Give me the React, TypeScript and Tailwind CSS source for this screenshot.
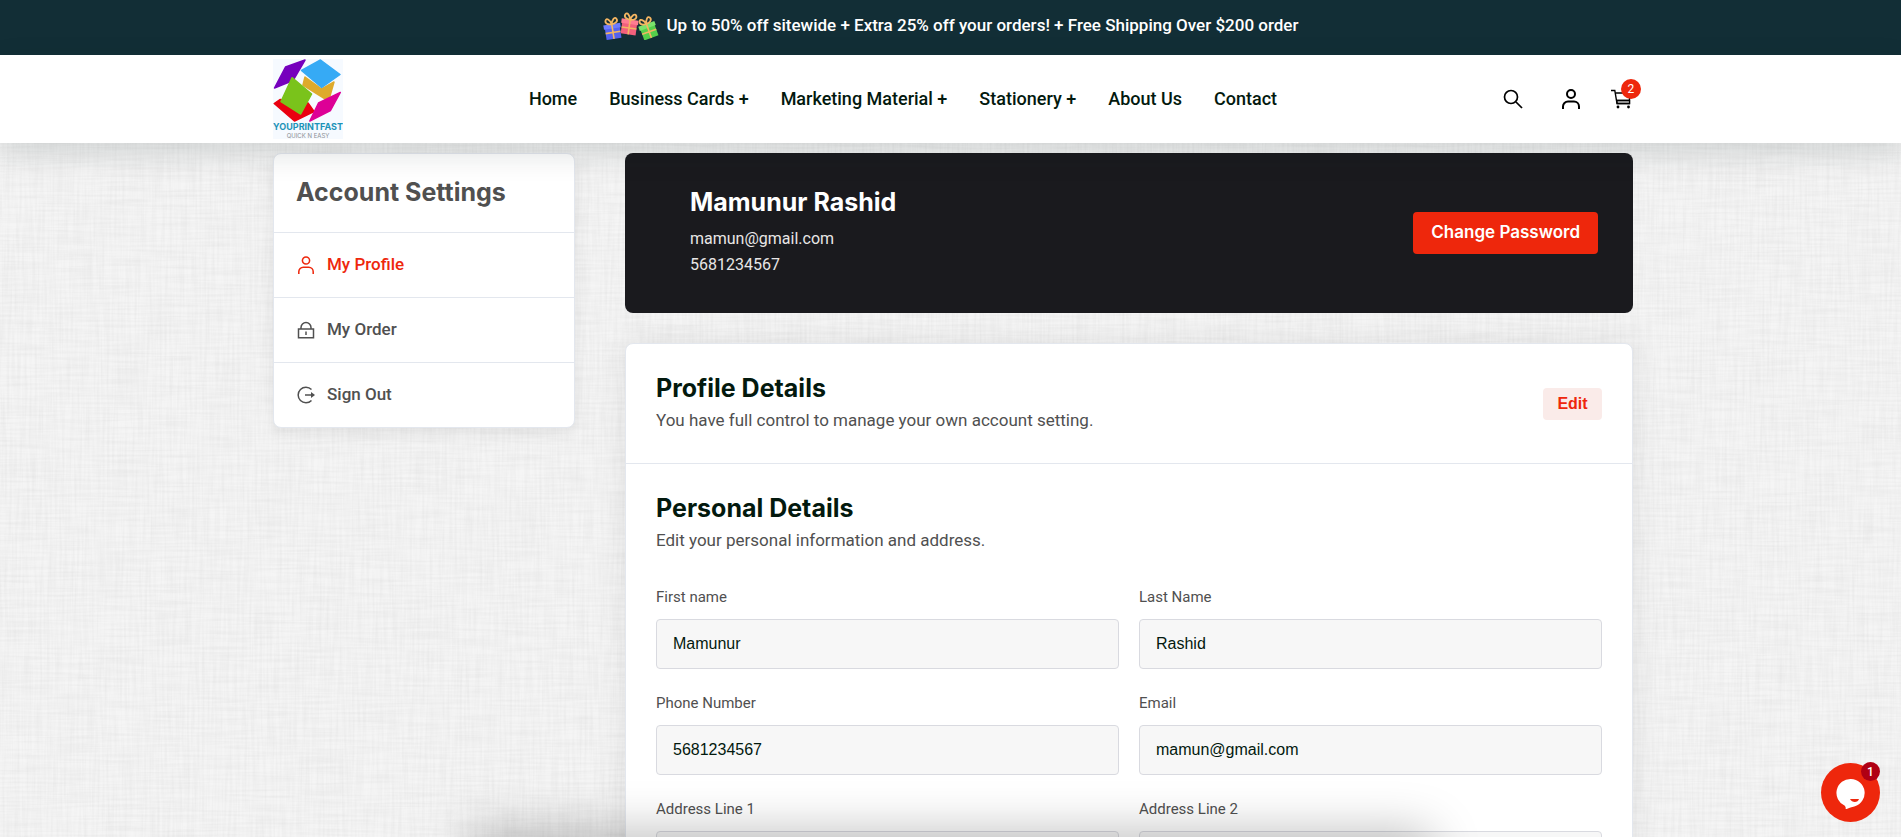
import type { ReactNode } from 'react'

const BODY_FONT = "font-['Roboto','Liberation_Sans',sans-serif]"
const HEADING_FONT = "font-['Inter','Liberation_Sans',sans-serif]"

const NAV_LINKS = [
  { label: 'Home' },
  { label: 'Business Cards', more: true },
  { label: 'Marketing Material', more: true },
  { label: 'Stationery', more: true },
  { label: 'About Us' },
  { label: 'Contact' },
]

const FIELDS = [
  { id: 'firstName', label: 'First name', value: 'Mamunur', type: 'text' },
  { id: 'lastName', label: 'Last Name', value: 'Rashid', type: 'text' },
  { id: 'phone', label: 'Phone Number', value: '5681234567', type: 'tel' },
  { id: 'email', label: 'Email', value: 'mamun@gmail.com', type: 'email' },
  { id: 'address1', label: 'Address Line 1', value: '', type: 'text' },
  { id: 'address2', label: 'Address Line 2', value: '', type: 'text' },
]

const UserIcon = ({ className, weight = 2 }: { className: string; weight?: number }) => (
  <svg className={className} viewBox="0 0 20 20" fill="none" stroke="currentColor" strokeWidth={weight}>
    <circle cx="10" cy="5" r="4" />
    <path d="M2 20v-2.500a5 5 0 0 1 5-5h6a5 5 0 0 1 5 5V20" />
  </svg>
)

const LockIcon = () => (
  <svg className="size-[18px]" viewBox="0 0 18 18" fill="none" stroke="currentColor" strokeWidth="1.5">
    <path d="M1.500 8h15v8.800h-15z" />
    <path d="M4 8V6.500a5 5 0 0 1 10 0V8" />
    <path d="M9 10.500v3.500" />
  </svg>
)

const SignOutIcon = () => (
  <svg className="size-[18px]" viewBox="0 0 18 18" fill="none" stroke="currentColor" strokeWidth="1.500">
    <path d="M14.500 3.500a7.800 7.800 0 1 0 0 11" />
    <path d="M8 9h8" />
    <path d="M14 6 18 9l-4 3z" fill="currentColor" stroke="none" />
  </svg>
)

const SearchIcon = () => (
  <svg className="size-5" viewBox="0 0 20 20" fill="none" stroke="currentColor" strokeWidth="1.700">
    <circle cx="8" cy="8" r="6.500" />
    <path d="m13 13 6 6" />
  </svg>
)

const CartIcon = () => (
  <svg className="size-5" viewBox="0 0 20 20" fill="none" stroke="currentColor" strokeWidth="1.400">
    <path d="M0 1.500h3.800L6 14.500h13" />
    <path d="M4.500 4h14.800l-1 7.500H5.600" />
    <path d="M5.800 11.500h12.800v3H6.300z" fill="#c4c4c4" />
    <circle cx="7" cy="18" r="1.400" fill="currentColor" stroke="none" />
    <circle cx="17.500" cy="18" r="1.400" fill="currentColor" stroke="none" />
  </svg>
)

const Gift = ({ place, box, lid }: { place: string; box: string; lid: string }) => (
  <g transform={place}>
    <path d="M-7.500-2h15v12h-15z" fill={box} />
    <path d="M-8.500-5h17v4.500h-17z" fill={lid} />
    <path d="M0-5V10M-7.500 3.500h15" stroke="#f3b562" strokeWidth="1.600" />
    <path d="M0-5C-3-4.500-7-6.500-5.500-9.500S-1-9 0-5C1-9 4-12.500 5.500-9.500S3-4.500 0-5" fill="none" stroke="#f3b562" strokeWidth="1.800" />
  </g>
)

const Gifts = () => (
  <svg className="h-7 w-14" viewBox="0 0 56 28" aria-hidden="true">
    <Gift place="translate(9.500 17) rotate(-9)" box="#5563f0" lid="#6c7bff" />
    <Gift place="translate(26.500 12.500) rotate(8)" box="#f2607c" lid="#ff7c92" />
    <Gift place="translate(45 16.500) rotate(-20)" box="#55cf4b" lid="#7be36c" />
  </svg>
)

const Logo = () => (
  <svg className="h-20 w-[70px]" viewBox="0 0 70 80" role="img" aria-label="YouPrintFast">
    <path d="M0 0h70v80H0z" fill="#f6faff" />
    <g strokeWidth="1.500" strokeLinejoin="round">
      <path d="M32 1 20 21.500 1.500 29 12.500 8z" fill="#7600bd" stroke="#7600bd" />
      <path d="M32 18 48.700 30 61 23 55.500 42 30 26z" fill="#deaa2c" stroke="#deaa2c" />
      <path d="M47.500 1 67 15.500 48.700 28.500 28.500 11.500z" fill="#36aaf5" stroke="#36aaf5" />
      <path d="M7 40.500 1.200 44.500 21.500 62 41 52.500 35 44z" fill="#ea0010" stroke="#ea0010" />
      <path d="M19 18.700 38.600 35 27.700 55 8 42.500z" fill="#7ac31b" stroke="#7ac31b" />
      <path d="M67.300 33.500 45.500 44 36.800 62 57.500 51.500z" fill="#dd0096" stroke="#dd0096" />
    </g>
    <text x="35" y="71" textAnchor="middle" fontSize="9" fontWeight="700" fontFamily="Inter, sans-serif" fill="#1d93b8">
      YOUPRINTFAST
    </text>
    <text x="35" y="79" textAnchor="middle" fontSize="6" fontFamily="Inter, sans-serif" fill="#8b8f93">
      QUICK N EASY
    </text>
  </svg>
)

// woven linen look behind the page
const LinenBackground = () => (
  <svg className="absolute inset-0 -z-10 size-full" aria-hidden="true">
    <filter id="weft" x="0" y="0" width="100%" height="100%" colorInterpolationFilters="sRGB">
      <feTurbulence type="fractalNoise" baseFrequency="0.02 0.4" numOctaves="2" seed="4" />
      <feColorMatrix values="0 0 0 0 0.5  0 0 0 0 0.5  0 0 0 0 0.5  0.12 0 0 0 -0.04" />
    </filter>
    <filter id="warp" x="0" y="0" width="100%" height="100%" colorInterpolationFilters="sRGB">
      <feTurbulence type="fractalNoise" baseFrequency="0.4 0.02" numOctaves="2" seed="9" />
      <feColorMatrix values="0 0 0 0 0.5  0 0 0 0 0.5  0 0 0 0 0.5  0.12 0 0 0 -0.04" />
    </filter>
    <rect width="100%" height="100%" fill="#f5f5f5" />
    <rect width="100%" height="100%" filter="url(#weft)" />
    <rect width="100%" height="100%" filter="url(#warp)" />
  </svg>
)

const Container = ({ className, children }: { className: string; children: ReactNode }) => (
  <div className={`mx-auto w-full max-w-[1365px] pl-[5px] ${className}`}>{children}</div>
)

const Header = () => (
  <header className="relative z-10 bg-white shadow-[0_10px_30px_rgba(20,40,40,0.15)]">
    <Container className="flex h-[88px] items-center justify-between">
      <a href="#home">
        <Logo />
      </a>
      <nav className="mr-10 flex gap-8 text-lg font-medium text-[#03190e]">
        {NAV_LINKS.map(({ label, more }) => (
          <a key={label} href="#nav" className="whitespace-nowrap">
            {label}
            {more && ' +'}
          </a>
        ))}
      </nav>
      <div className="mr-0.5 flex items-center gap-[38px] text-black">
        <button type="button" aria-label="Search">
          <SearchIcon />
        </button>
        <button type="button" aria-label="Account">
          <UserIcon className="size-5" />
        </button>
        <button type="button" aria-label="Cart" className="relative -ml-2">
          <CartIcon />
          <span className="absolute -top-2.5 -right-2.5 flex size-5 items-center justify-center rounded-full bg-[#ee270c] text-xs text-white">
            2
          </span>
        </button>
      </div>
    </Container>
  </header>
)

const SideLink = ({ icon, label, active }: { icon: ReactNode; label: string; active?: boolean }) => (
  <a
    href="#account"
    className={`flex h-[65px] items-center gap-3 border-t border-[#e3e7ee] px-[23px] text-[17px] font-medium ${
      active ? 'text-[#ee270c]' : 'text-[#505050]'
    }`}
  >
    {icon}
    {label}
  </a>
)

const Sidebar = () => (
  <aside className="w-[302px] shrink-0 self-start overflow-hidden rounded-lg border border-[#e3e7ee] bg-white shadow-[0_4px_16px_rgba(0,0,0,0.08)]">
    <h2 className={`flex h-[78px] items-center px-[22px] text-[25px] font-bold text-[#505050] ${HEADING_FONT}`}>
      Account Settings
    </h2>
    <SideLink icon={<UserIcon className="size-[18px]" weight={1.7} />} label="My Profile" active />
    <SideLink icon={<LockIcon />} label="My Order" />
    <SideLink icon={<SignOutIcon />} label="Sign Out" />
  </aside>
)

const SectionTitle = ({ title, text }: { title: string; text: string }) => (
  <div>
    <h2 className={`text-[25px] leading-8 font-bold text-[#03190e] ${HEADING_FONT}`}>{title}</h2>
    <p className="mt-1 leading-6 text-[17px] text-[#505050]">{text}</p>
  </div>
)

const App = () => {
  return (
    <div className={`relative isolate h-screen overflow-hidden text-base ${BODY_FONT}`}>
      <LinenBackground />

      <div className="flex h-[55px] items-center justify-center gap-2 bg-[#122e36] pb-1 text-white">
        <Gifts />
        <p className="text-[17px] font-medium">
          Up to 50% off sitewide + Extra 25% off your orders! + Free Shipping Over $200 order
        </p>
      </div>

      <Header />

      <Container className="flex gap-[50px] pt-2.5">
        <Sidebar />

        <main className="min-w-0 flex-1">
          <section className="flex h-40 items-center justify-between rounded-lg bg-[#1a1a1e] pr-[35px] pl-[65px]">
            <div className="pb-0.5">
              <h1 className={`text-[25px] leading-8 font-bold text-white ${HEADING_FONT}`}>Mamunur Rashid</h1>
              <p className="mt-2 leading-[26px] text-[#e8e6e6]">
                mamun@gmail.com
                <br />
                5681234567
              </p>
            </div>
            <button
              type="button"
              className={`h-[42px] rounded bg-[#ee270c] px-[18px] text-[17px] font-semibold text-white ${HEADING_FONT}`}
            >
              Change Password
            </button>
          </section>

          <section className="mt-[30px] rounded-lg border border-[#e3e7ee] bg-white shadow-[0_0_30px_rgba(0,0,0,0.08)]">
            <div className="flex h-[120px] items-center justify-between border-b border-[#e3e7ee] px-[30px] pb-1">
              <SectionTitle title="Profile Details" text="You have full control to manage your own account setting." />
              <button
                type="button"
                className="mt-1 h-8 w-[59px] rounded bg-[#faebe9] font-['Liberation_Sans',sans-serif] font-bold text-[#ee270c]"
              >
                Edit
              </button>
            </div>

            <div className="px-[30px] py-7">
              <SectionTitle title="Personal Details" text="Edit your personal information and address." />
              <form className="mt-[35px] grid grid-cols-2 gap-x-5 gap-y-6">
                {FIELDS.map(({ id, label, value, type }) => (
                  <div key={id}>
                    <label htmlFor={id} className="block text-[15px] leading-5 text-[#505050]">
                      {label}
                    </label>
                    <input
                      id={id}
                      type={type}
                      defaultValue={value}
                      className="mt-3 block h-[50px] w-full rounded border border-[#d9dae0] bg-[#f7f7f7] px-4 font-['Liberation_Sans',sans-serif] text-[#03190e]"
                    />
                  </div>
                ))}
              </form>
            </div>
          </section>
        </main>
      </Container>

      <div className="pointer-events-none absolute inset-x-1/4 top-full h-10 shadow-[0_0_50px_4px_rgba(0,0,0,0.28)]" />

      <button
        type="button"
        aria-label="Open chat"
        className="absolute right-[21px] bottom-[15px] flex size-[59px] items-center justify-center rounded-full bg-[#ee270c]"
      >
        <svg className="size-8" viewBox="0 0 32 32">
          <path d="M16 2a14 14 0 0 1 4 27.300c-2 .7-6 1.700-9.500 3.200.4-1.500.3-2.500-.7-3.700A14 14 0 0 1 16 2z" fill="#fff" />
          <path d="M15 22h9c-1 3.800-7 4-9 0z" fill="#ee270c" />
        </svg>
        <span className="absolute -top-px right-0 flex size-[19px] items-center justify-center rounded-full bg-[#b00014] text-xs font-medium text-white">
          1
        </span>
      </button>
    </div>
  )
}

export default App
